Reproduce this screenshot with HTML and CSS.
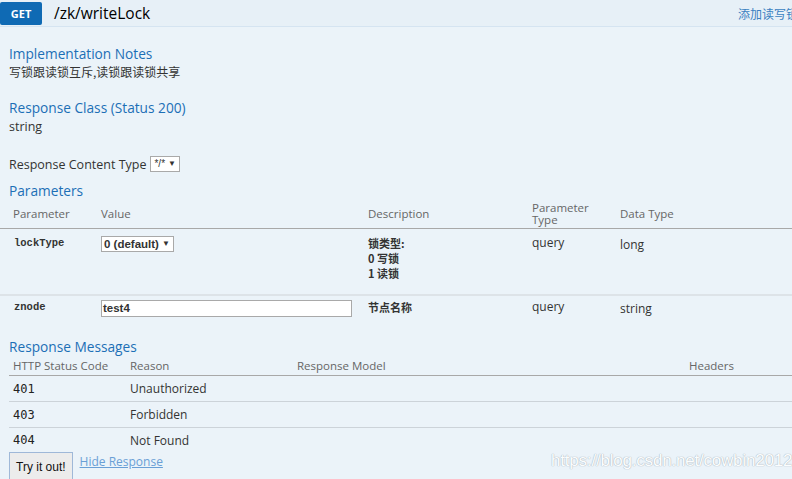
FILE: index.html
```html
<!DOCTYPE html>
<html>
<head>
<meta charset="utf-8">
<link rel="stylesheet" href="styles.css">
</head>
<body>
<div class="op">
  <div class="heading">
    <span class="method">GET</span>
    <span class="path">/zk/writeLock</span>
    <span class="summary">添加读写锁</span>
  </div>
  <div class="content">
    <h4 class="first">Implementation Notes</h4>
    <p class="notes">写锁跟读锁互斥,读锁跟读锁共享</p>
    <h4>Response Class (Status 200)</h4>
    <p class="model">string</p>
    <div class="ctype">
      <span>Response Content Type</span>
      <span class="sel small">*/* <i>▼</i></span>
    </div>
    <h4 class="params-h">Parameters</h4>
    <table class="params">
      <thead>
        <tr>
          <th class="c1">Parameter</th>
          <th class="c2">Value</th>
          <th class="c3">Description</th>
          <th class="c4">Parameter<br>Type</th>
          <th class="c5">Data Type</th>
        </tr>
      </thead>
      <tbody>
        <tr class="r1">
          <td class="code">lockType</td>
          <td><span class="sel">0 (default) <i>▼</i></span></td>
          <td class="desc">锁类型:<br>0 写锁<br>1 读锁</td>
          <td>query</td>
          <td class="dt">long</td>
        </tr>
        <tr class="r2">
          <td class="code">znode</td>
          <td><span class="input">test4</span></td>
          <td class="desc">节点名称</td>
          <td>query</td>
          <td class="dt">string</td>
        </tr>
      </tbody>
    </table>
    <h4 class="resp-h">Response Messages</h4>
    <table class="resp">
      <thead>
        <tr>
          <th class="d1">HTTP Status Code</th>
          <th class="d2">Reason</th>
          <th class="d3">Response Model</th>
          <th class="d4">Headers</th>
        </tr>
      </thead>
      <tbody>
        <tr><td class="scode">401</td><td>Unauthorized</td><td></td><td></td></tr>
        <tr><td class="scode">403</td><td>Forbidden</td><td></td><td></td></tr>
        <tr class="last"><td class="scode">404</td><td>Not Found</td><td></td><td></td></tr>
      </tbody>
    </table>
    <div class="actions">
      <span class="btn">Try it out!</span>
      <a class="hide">Hide Response</a>
      <span class="wm">https://blog.csdn.net/cowbin2012</span>
    </div>
  </div>
</div>
</body>
</html>
```
FILE: styles.css
```css
html, body {
  margin: 0;
  padding: 0;
  background: #ebf3f9;
  font-family: "Open Sans", "Noto Sans CJK SC", sans-serif;
  color: #333;
  overflow: hidden;
}
.op {
  width: 792px;
  height: 479px;
  overflow: hidden;
}
.heading {
  height: 26px;
  background: #e7f0f7;
  border-bottom: 1px solid #d5e4f1;
  display: flex;
  align-items: center;
}
.method {
  background: #0f6ab4;
  color: #fff;
  font-size: 11px;
  font-weight: bold;
  width: 42px;
  height: 23px;
  margin-top: 1px;
  border-radius: 2px;
  display: flex;
  align-items: center;
  justify-content: center;
}
.path {
  margin-left: 12px;
  font-size: 15.5px;
  color: #000;
}
.summary {
  margin-left: auto;
  margin-right: -7px;
  font-size: 12px;
  color: #3a7fc1;
  font-family: "Noto Sans CJK SC", sans-serif;
  white-space: nowrap;
  overflow: hidden;
  width: 61px;
  flex-shrink: 0;
}
.content {
  padding: 0 0 0 9px;
  border-left: 1px solid #d5e4f1;
  margin-left: -1px;
}
h4 {
  margin: 0;
  font-weight: normal;
  font-size: 13.7px;
  color: #1c6fb6;
  line-height: 18px;
}
h4.first { padding-top: 18px; }
.notes {
  margin: 1px 0 0;
  font-size: 12px;
  font-family: "Noto Sans CJK SC", sans-serif;
  line-height: 16px;
}
.content h4:nth-of-type(2) { margin-top: 19px; }
.model {
  margin: 1px 0 0;
  font-size: 12.5px;
  line-height: 18px;
}
.ctype {
  margin-top: 19px;
  font-size: 12.5px;
  display: flex;
  align-items: center;
  gap: 4px;
  height: 18px;
}
.sel {
  display: inline-flex;
  align-items: center;
  background: #fff;
  border: 1px solid #a9a9a9;
  font-size: 12px;
  font-weight: bold;
  height: 14px;
  padding: 0 3px;
  gap: 3px;
  line-height: 14px;
  font-family: "Liberation Sans", sans-serif;
}
.sel i {
  font-style: normal;
  font-size: 8px;
}
.sel.small {
  font-weight: normal;
  font-size: 10px;
  height: 14px;
}
.params-h { margin-top: 9px; }
table {
  border-collapse: collapse;
}
.params {
  margin-left: -9px;
  width: 792px;
}
.params th {
  font-weight: normal;
  font-size: 11.5px;
  color: #666;
  text-align: left;
  padding: 0;
  height: 28px;
  line-height: 11.5px;
  border-bottom: 1px solid #a8a8a8;
  vertical-align: middle;
}
.params th.c4 { line-height: 12px; }
.params .c1 { width: 88px; padding-left: 13px; }
.params .c2 { width: 267px; }
.params .c3 { width: 164px; }
.params .c4 { width: 88px; }
.params td {
  padding: 0;
  font-size: 12px;
  vertical-align: top;
  text-align: left;
}
.params td:first-child { padding-left: 14px; }
.params .r1 td { padding-top: 7px; height: 56px; border-bottom: 2px solid #dde3e8; }
.params .r2 td { padding-top: 4px; height: 23px; }
.params .r1 td:nth-child(4), .params .r2 td:nth-child(4) { line-height: 14px; }
td.code {
  font-family: "Liberation Mono", monospace;
  font-weight: bold;
  font-size: 10.5px;
  line-height: 14px;
}
td.scode {
  font-family: "DejaVu Sans Mono", monospace;
  font-size: 10px;
  color: #222;
}
.params td.desc {
  font-family: "Noto Sans CJK SC", sans-serif;
  font-weight: bold;
  font-size: 11px;
  line-height: 15px;
}
.params td.dt { padding-top: 9px; line-height: 14px; }
.params .r2 td.dt { padding-top: 6px; }
.params .r1 td:nth-child(2) { padding-top: 6px; }
.params .r1 .sel { height: 14px; padding: 0 3px 0 2px; font-size: 11.5px; }
.input {
  display: block;
  width: 248px;
  height: 15px;
  border: 1px solid #a9a9a9;
  background: #fff;
  font-family: "Liberation Sans", sans-serif;
  font-weight: bold;
  font-size: 11.5px;
  line-height: 15px;
  padding-left: 1px;
}
.resp-h { margin-top: 13px; }
.resp {
  width: 783px;
}
.resp th {
  font-weight: normal;
  font-size: 11.5px;
  color: #666;
  text-align: left;
  padding: 0 0 0 4px;
  height: 19px;
  line-height: 14px;
  border-bottom: 1px solid #a8a8a8;
}
.resp .d1 { width: 113px; }
.resp .d2 { width: 163px; }
.resp .d3 { width: 388px; }
.resp td {
  padding: 0 0 0 4px;
  font-size: 12px;
  height: 25px;
  border-bottom: 1px solid #ccd3d9;
  vertical-align: middle;
}
.resp tr.last td { border-bottom: none; height: 24px; }
.actions {
  display: flex;
  align-items: flex-start;
  gap: 7px;
  position: relative;
  height: 30px;
}
.btn {
  display: inline-block;
  font-family: "Liberation Sans", sans-serif;
  font-size: 12px;
  color: #111;
  background: #ececec;
  border: 1px solid #9fb8d8;
  padding: 7px 6px 8px;
}
.hide {
  font-size: 12px;
  color: #6a9fd6;
  text-decoration: underline;
  margin-top: 1px;
}
.wm {
  position: absolute;
  left: 542px;
  top: -1px;
  font-family: "Liberation Sans", sans-serif;
  font-size: 17px;
  color: #fbfdfe;
  text-shadow: 0 0 1px #a9b4bd, 0 0 1px #a9b4bd;
  letter-spacing: -0.2px;
}
```
